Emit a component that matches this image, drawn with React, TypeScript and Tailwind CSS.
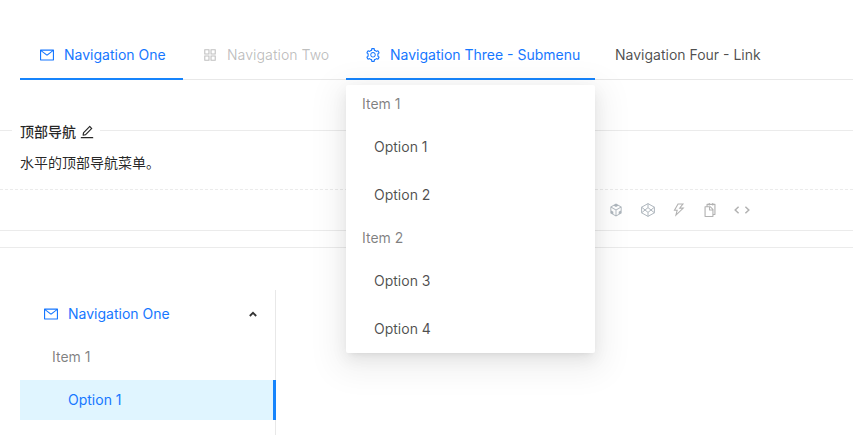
import React from "react";
import {
  AiOutlineAppstore,
  AiOutlineCodeSandbox,
  AiOutlineCodepen,
  AiOutlineEdit,
  AiOutlineMail,
  AiOutlineSetting,
  AiOutlineSnippets,
  AiOutlineThunderbolt,
} from "react-icons/ai";

const groups = [
  { title: "Item 1", options: ["Option 1", "Option 2"] },
  { title: "Item 2", options: ["Option 3", "Option 4"] },
];

function SubmenuPopup() {
  return (
    <div className="absolute top-full left-0 z-10 mt-[5px] w-full rounded-xs bg-white shadow-[0_3px_6px_-4px_rgba(0,0,0,0.12),0_6px_16px_0_rgba(0,0,0,0.07),0_9px_32px_10px_rgba(0,0,0,0.06)]">
      {groups.map((group) => (
        <div key={group.title}>
          <div className="px-4 py-2 leading-[22px] text-black/50">{group.title}</div>
          <ul>
            {group.options.map((option) => (
              <li key={option} className="py-1">
                <button type="button" className="block h-10 w-full pl-7 text-left text-black/70">
                  {option}
                </button>
              </li>
            ))}
          </ul>
        </div>
      ))}
    </div>
  );
}

function TopNav() {
  return (
    <nav className="ml-5 border-b border-[#e8e8e8]">
      <ul className="-mb-px flex h-12 whitespace-nowrap">
        <li className="w-[163px]">
          <button type="button" className="flex h-full w-full items-center gap-2.5 border-b-2 border-[#1684fc] pl-5 text-[#1677ff]">
            <AiOutlineMail size={16} className="-mx-px shrink-0" />
            Navigation One
          </button>
        </li>
        <li className="w-[163px]">
          <button type="button" disabled className="flex h-full w-full items-center gap-2.5 border-b-2 border-transparent pl-5 text-black/25">
            <AiOutlineAppstore size={16} className="-mx-px shrink-0" />
            Navigation Two
          </button>
        </li>
        <li className="relative w-[249px]">
          <button type="button" aria-expanded="true" className="flex h-full w-full items-center gap-2.5 border-b-2 border-[#1684fc] pl-5 text-[#1677ff]">
            <AiOutlineSetting size={16} className="-mx-px shrink-0" />
            Navigation Three - Submenu
          </button>
          <SubmenuPopup />
        </li>
        <li>
          <a href="#link" className="flex h-full items-center border-b-2 border-transparent px-5 text-black/70">
            Navigation Four - Link
          </a>
        </li>
      </ul>
    </nav>
  );
}

function DemoMeta() {
  return (
    <section className="mt-[38px]">
      <div className="flex items-center">
        <span className="h-px w-3 bg-[#ebebeb]" />
        <div className="flex items-center gap-1 pr-1.5 pl-2 text-black/85">
          <h2 className="pt-1 leading-5 font-medium">顶部导航</h2>
          <button type="button" aria-label="Edit" className="pt-1">
            <AiOutlineEdit size={16} className="-mx-px" />
          </button>
        </div>
        <span className="h-px flex-1 bg-[#ebebeb]" />
      </div>
      <p className="px-5 pt-[11px] pb-4 leading-5 text-black/85">水平的顶部导航菜单。</p>
      <div className="flex h-[42px] items-center justify-end gap-4 border-t border-b border-t-[#ebebeb] border-b-[#ebebeb] pr-[103px] text-[#b2b2b2] [border-top-style:dashed]">
        <button type="button" aria-label="Open in CodeSandbox" className="flex w-4 justify-center text-[#aeb6bd]">
          <AiOutlineCodeSandbox size={16} />
        </button>
        <button type="button" aria-label="Open in CodePen" className="flex w-4 justify-center text-[#aeb6bd]">
          <svg viewBox="0 0 16 16" className="size-4" fill="none" stroke="currentColor" strokeLinejoin="round">
            <path d="M8 1.6 14.4 5.2V10.8L8 14.4 1.6 10.8V5.2ZM8 1.6V5.6M8 10.4V14.4M1.6 5.2 8 10.4 14.4 5.2M1.6 10.8 8 5.6 14.4 10.8" />
          </svg>
        </button>
        <button type="button" aria-label="Open in StackBlitz" className="flex w-3.5 justify-center">
          <AiOutlineThunderbolt size={16} className="-mx-px" />
        </button>
        <button type="button" aria-label="Copy code" className="flex w-4 justify-center">
          <AiOutlineSnippets size={16} />
        </button>
        <button type="button" aria-label="Show code" className="flex w-4 justify-center">
          <svg viewBox="0 0 16 14" className="h-3.5 w-4" fill="none" stroke="currentColor" strokeWidth="1.5">
            <path d="M4.6 3.8 1.2 7 4.6 10.2M11.4 3.8 14.8 7 11.4 10.2" />
          </svg>
        </button>
      </div>
    </section>
  );
}

function SideNav() {
  return (
    <nav className="mt-[42px] ml-5 w-64 border-r border-[#e8e8e8] pt-1 pb-4">
      <button type="button" aria-expanded="true" className="flex h-10 w-full items-center gap-2.5 pr-[18px] pl-6 text-[#1677ff]">
        <AiOutlineMail size={16} className="-mx-px" />
        <span className="flex-1 text-left">Navigation One</span>
        <svg viewBox="0 0 8 6" className="h-1.5 w-2 text-black/80" fill="none" stroke="currentColor" strokeWidth="1.8">
          <path d="M.8 5 4 1.8 7.2 5" />
        </svg>
      </button>
      <div className="mt-1 py-2 pl-8 leading-[22px] text-black/50">Item 1</div>
      <button type="button" className="-mr-px mt-1 block h-10 w-64 border-r-3 border-[#1684fc] bg-[#e0f5ff] pl-12 text-left text-[#1677ff]">
        Option 1
      </button>
    </nav>
  );
}

export default function App() {
  return (
    <main className="overflow-hidden bg-white pt-8 font-['Inter','Noto_Sans_CJK_SC',sans-serif] text-sm">
      <TopNav />
      <DemoMeta />
      <div className="mt-4 h-px bg-[#ebebeb]" />
      <SideNav />
    </main>
  );
}
